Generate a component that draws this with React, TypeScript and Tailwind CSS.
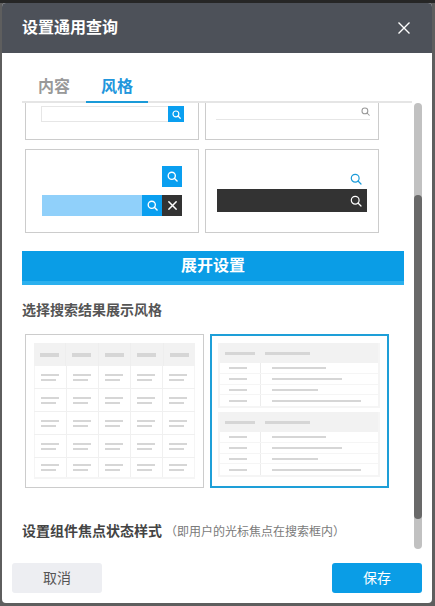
import React from 'react';

const cols = [0, 1, 2, 3, 4];
const rowHeights = ['h-[23px]', 'h-[23px]', 'h-[23px]', 'h-[23px]', 'h-[21px]'];

function SearchIcon({ className, weight = 1.2 }: { className?: string; weight?: number }) {
  return (
    <svg viewBox="0 0 12 12" fill="none" stroke="currentColor" strokeWidth={weight} className={className}>
      <circle cx="5.2" cy="5.2" r="3.9" />
      <path d="M8 8l3 3" strokeLinecap="round" />
    </svg>
  );
}

function CloseIcon({ className, weight = 1.4 }: { className?: string; weight?: number }) {
  return (
    <svg viewBox="0 0 12 12" fill="none" stroke="currentColor" strokeWidth={weight} className={className}>
      <path d="M0.5 0.5l11 11M11.5 0.5l-11 11" />
    </svg>
  );
}

function TablePreview() {
  return (
    <div className="w-[179px] h-[154px] border border-[#ccc] px-[8px] py-[8px] flex flex-col">
      <div className="flex h-[23px] bg-[#f2f2f2] shrink-0">
        {cols.map((c) => (
          <div key={c} className="flex-1 flex items-center pl-[6px] border-r border-[#eee] last:border-r-0">
            <div className="w-[19px] h-[4px] bg-[#d6d6d6]" />
          </div>
        ))}
      </div>
      {rowHeights.map((h, r) => (
        <div key={r} className={`flex ${h} border-b border-[#f0f0f0] last:border-b-2 last:border-[#f5f5f5] shrink-0`}>
          {cols.map((c) => (
            <div key={c} className="flex-1 flex flex-col justify-center gap-[3px] pl-[6px] border-r border-[#f0f0f0] first:border-l first:border-l-[#f5f5f5] last:border-r-[#f5f5f5]">
              <div className="w-[18px] h-[2px] bg-[#d6d6d6]" />
              <div className="w-[15px] h-[2px] bg-[#d6d6d6]" />
            </div>
          ))}
        </div>
      ))}
    </div>
  );
}

function ListGroup() {
  const rows = [
    { height: 'h-[11px]', width: 'w-[54px]' },
    { height: 'h-[11px]', width: 'w-[70px]' },
    { height: 'h-[10px]', width: 'w-[46px]' },
    { height: 'h-[11px]', width: 'w-[89px]' },
  ];
  return (
    <div className="border-2 border-t-0 border-[#f5f5f5]">
      <div className="flex items-center h-[20px] bg-[#f2f2f2] pl-[5px] gap-[10px]">
        <div className="w-[30px] h-[3px] bg-[#d6d6d6]" />
        <div className="w-[45px] h-[3px] bg-[#d6d6d6]" />
      </div>
      {rows.map((row, i) => (
        <div key={i} className={`flex ${row.height} items-center border-b border-[#f5f5f5] last:border-b-0`}>
          <div className="w-[41px] h-full pl-[9px] flex items-center border-r border-[#ececec]">
            <div className="w-[18px] h-[2px] bg-[#d6d6d6]" />
          </div>
          <div className={`${row.width} h-[2px] bg-[#d6d6d6] ml-[11px]`} />
        </div>
      ))}
    </div>
  );
}

export default function App() {
  return (
    <div
      className="w-[435px] h-[606px] overflow-hidden bg-[#5e5e5e]"
      style={{ fontFamily: '"Liberation Sans", "Noto Sans CJK SC", sans-serif' }}
    >
      <div className="h-[3px] bg-[#262626]" />
      <div className="w-[430px] h-[600px] ml-[2px] bg-white rounded-[4px] overflow-hidden flex flex-col">
        <div className="h-[50px] shrink-0 bg-[#4d5159] flex items-center justify-between pl-[20px] pr-[22px]">
          <span className="text-white text-[16px] font-bold">设置通用查询</span>
          <CloseIcon className="w-[12px] h-[12px] text-white" />
        </div>

        <div className="h-[50px] shrink-0 flex items-end px-[20px]">
          <div className="flex w-[390px] border-b-2 border-[#e5e5e5] h-[30px]">
            <div className="w-[64px] text-center text-[16px] font-bold text-[#999] leading-[28px]">内容</div>
            <div className="w-[62px] h-[30px] text-center text-[16px] font-bold text-[#2196dc] leading-[28px] border-b-2 border-[#1a9ad8]">风格</div>
          </div>
        </div>

        <div className="flex-1 min-h-0 relative overflow-hidden">
          <div className="pl-[20px]">
            <div className="flex gap-[6px] pl-[3px]">
              <div className="w-[174px] h-[37px] border border-t-0 border-[#ccc] pl-[15px] pr-[14px] pt-[3px]">
                <div className="h-[16px] border border-[#e6e6e6] flex justify-end">
                  <div className="w-[16px] h-[16px] -my-px -mr-px bg-[#0a9ff0] flex items-center justify-center">
                    <SearchIcon className="w-[9px] h-[9px] text-white" weight={1.6} />
                  </div>
                </div>
              </div>
              <div className="w-[174px] h-[37px] border border-t-0 border-[#ccc] pl-[10px] pr-[8px]">
                <div className="h-[17px] border-b border-[#e6e6e6] flex justify-end items-center">
                  <SearchIcon className="w-[9px] h-[9px] text-[#999]" weight={1.4} />
                </div>
              </div>
            </div>

            <div className="flex gap-[6px] pl-[3px] mt-[9px]">
              <div className="w-[174px] h-[84px] border border-[#ccc] pt-[16px] pl-[16px] pr-[16px] flex flex-col items-end">
                <div className="w-[20px] h-[21px] bg-[#0a9ff0] flex items-center justify-center">
                  <SearchIcon className="w-[11px] h-[11px] text-white" weight={1.5} />
                </div>
                <div className="flex w-full h-[21px] mt-[8px]">
                  <div className="flex-1 bg-[#90d0fa]" />
                  <div className="w-[20px] bg-[#0a9ff0] flex items-center justify-center">
                    <SearchIcon className="w-[11px] h-[11px] text-white" weight={1.5} />
                  </div>
                  <div className="w-[20px] bg-[#333] flex items-center justify-center">
                    <CloseIcon className="w-[9px] h-[9px] text-white" weight={2} />
                  </div>
                </div>
              </div>
              <div className="w-[174px] h-[84px] border border-[#ccc] pt-[21px] pl-[11px] pr-[11px] flex flex-col items-end">
                <div className="h-[16px] flex items-center pr-[5px]">
                  <SearchIcon className="w-[12px] h-[12px] text-[#1a9ad8]" />
                </div>
                <div className="w-full h-[23px] mt-[2px] bg-[#333] flex items-center justify-end pr-[5px]">
                  <SearchIcon className="w-[12px] h-[12px] text-white" />
                </div>
              </div>
            </div>

            <div className="w-[382px] h-[34px] mt-[18px] bg-[#0a9de6] border-b-4 border-[#2bb0ee] flex items-center justify-center text-white text-[16px] font-bold">
              展开设置
            </div>

            <div className="mt-[16px] text-[#555] text-[14px] font-bold leading-[18px]">选择搜索结果展示风格</div>

            <div className="flex items-start gap-[6px] mt-[15px] pl-[3px]">
              <TablePreview />
              <div className="w-[179px] h-[154px] border-2 border-[#1e9fd8] pl-[6px] pr-[7px] py-[7px] flex flex-col gap-[4px]">
                <ListGroup />
                <ListGroup />
              </div>
            </div>

            <div className="mt-[33px] flex items-baseline">
              <span className="text-[#444] text-[14px] font-bold">设置组件焦点状态样式</span>
              <span className="text-[#7a7a7a] text-[12px] ml-[3px]">（即用户的光标焦点在搜索框内）</span>
            </div>
          </div>

          <div className="absolute right-[10px] top-0 bottom-[7px] w-[8px] rounded-full bg-[#c1c1c1]">
            <div className="mt-[92px] h-[324px] rounded-full bg-[#696969]" />
          </div>
        </div>

        <div className="h-[47px] shrink-0 flex items-start justify-between px-[10px] pt-[7px]">
          <div className="w-[90px] h-[30px] rounded-[3px] bg-[#edeef2] flex items-center justify-center text-[#555] text-[14px]">取消</div>
          <div className="w-[90px] h-[30px] rounded-[3px] bg-[#0a9de6] flex items-center justify-center text-white text-[14px]">保存</div>
        </div>
      </div>
    </div>
  );
}
